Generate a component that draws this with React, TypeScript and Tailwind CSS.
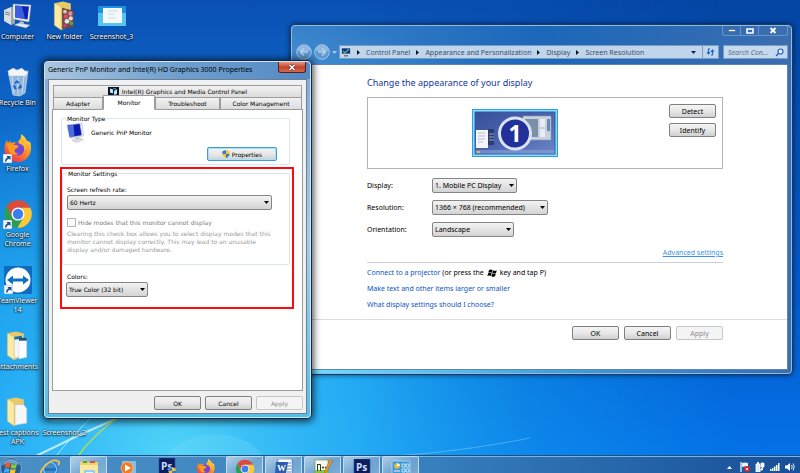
import type { ReactNode } from "react";
import clsx from "clsx";

const TAHOMA = "font-['DejaVu_Sans',sans-serif] text-[6px] leading-[9px]";
const SEGOE = "font-['Noto_Sans','Open_Sans',sans-serif] text-[7px] leading-[9px]";

function ComputerIcon() {
  return (
    <svg viewBox="0 0 30 28" className="h-[28px] w-[30px]">
      <path d="M1 8l7-3 4 1v15l-4 2-7-4z" fill="#d9dee3" />
      <path d="M8 5l4 1v15l-4 2z" fill="#9aa5b0" />
      <path d="M2 10l5 1M2 12l5 1" stroke="#7c8791" />
      <path d="M10 2l18 1-2 17-16-3z" fill="#eef2f5" stroke="#8b98a6" strokeWidth=".5" />
      <path d="M12 3.500l14 1-1.500 13-12.500-2z" fill="#0d22b4" />
      <path d="M12 3.500l7 .5 3 13-10-1.500z" fill="#4f78ee" opacity=".7" />
      <path d="M17 19l4 1-.5 3h-4z" fill="#b9c2ca" />
      <path d="M11 23l5-2 11 2-4 3z" fill="#e6eaee" stroke="#919ba5" strokeWidth=".4" />
    </svg>
  );
}

function MonitorIcon({ className }: { className: string }) {
  return (
    <svg viewBox="0 0 18 20" className={className}>
      <path d="M3 2l13-1.500 1.500 12.500-12.500 2.500z" fill="#edf1f5" stroke="#a3afba" strokeWidth=".5" />
      <path d="M1 2l13-1.500 2 12-12.500 2z" fill="#0b1bb0" stroke="#cfd6de" strokeWidth=".7" />
      <path d="M1.500 2.500l6-.7 1 11.700-4.500.7z" fill="#6b8df0" opacity=".7" />
      <path d="M9 14.500l4-.5 1 2.500-4 .5z" fill="#c5ccd3" />
      <path d="M6 17.500l8-2.500 3.500 1.500-7 3z" fill="#dce1e6" stroke="#9ea8b2" strokeWidth=".4" />
    </svg>
  );
}

function FolderIcon({ kind }: { kind: "photos" | "docs" | "page" }) {
  return (
    <svg viewBox="0 0 26 31" className="h-[30px] w-[26px]">
      <path d="M3 2l8-1.500 8 2v23L9 30z" fill="#e8c868" />
      {kind === "photos" && (
        <g>
          <path d="M10 7l12 3v17l-12 2z" fill="#6b4a4c" />
          <circle cx="13" cy="11" r="2" fill="#ecc3a6" />
          <circle cx="18.500" cy="13" r="2.300" fill="#e58a9a" />
          <circle cx="14" cy="16" r="2.300" fill="#d94f63" />
          <circle cx="19" cy="18" r="2.200" fill="#f1d9c8" />
          <circle cx="15" cy="21" r="2.500" fill="#dfe8e0" />
          <circle cx="19.500" cy="23" r="2" fill="#5ba04c" />
          <circle cx="13" cy="25" r="2" fill="#c4425c" />
        </g>
      )}
      {kind === "docs" && (
        <g>
          <path d="M9 6l8-1 0 21-8 2z" fill="#f4f7f9" stroke="#b9c1c9" strokeWidth=".4" />
          <path d="M9 6l8-1v3l-8 1z" fill="#1f6f9c" />
          <path d="M14 9l8-2v20l-8 2z" fill="#ffffff" stroke="#b9c1c9" strokeWidth=".4" />
          <path d="M14 7l8 0v3l-8 0z" fill="#15577f" />
        </g>
      )}
      {kind === "page" && (
        <path d="M10 8l9 0 3 4v15l-12 2z" fill="#f6f7f8" stroke="#bfc5cb" strokeWidth=".5" />
      )}
      <path d="M2 2l7 4.500V30l-7-5z" fill="#fbe9a6" stroke="#d7b657" strokeWidth=".4" />
    </svg>
  );
}

function ScreenshotIcon() {
  return (
    <svg viewBox="0 0 28 20" className="h-[20px] w-[28px]">
      <rect width="28" height="20" fill="#57c5ee" />
      <rect width="28" height="7" fill="#1c93da" />
      <rect x="5" y="2" width="19" height="15" fill="#f3f8fb" />
      <path d="M10 5h10M10 8h6M10 12h8" stroke="#c3ced6" strokeWidth=".7" />
    </svg>
  );
}

function RecycleBinIcon() {
  return (
    <svg viewBox="0 0 26 30" className="h-[30px] w-[26px]">
      <path d="M3 4l20 0-3 22-5 3-7-1z" fill="#a7c5de" fillOpacity=".85" stroke="#dfeaf3" strokeWidth=".6" />
      <path d="M3 4l5-3 4 2 5-2 3 3 3 1-2 4-17 0z" fill="#f1f5f9" stroke="#9eb1c2" strokeWidth=".4" />
      <path d="M7 9l2 17M19 9l-2 17M13 10v18" stroke="#e9f2f8" strokeWidth=".7" />
      <path d="M9 16l3-3 3 3-2 .5-1-1-1.500 1.500z M16 17l1 4-4 1 .5-2z M8 18l1 4 3 .5-1-2-.500-2z" fill="#1f62c9" />
    </svg>
  );
}

function FirefoxIcon({ className }: { className: string }) {
  return (
    <svg viewBox="0 0 30 30" className={className}>
      <defs>
        <linearGradient id="flame" x1=".8" y1="0" x2=".2" y2="1">
          <stop offset="0" stopColor="#ffe14a" />
          <stop offset=".45" stopColor="#ff9422" />
          <stop offset="1" stopColor="#ee2b50" />
        </linearGradient>
      </defs>
      <path
        d="M18 1c3 2 5 4 6 7 2 0 3 1 3.500 2 2 9-2 18-12 19C7 29 1 23 1.500 15c0-3 1-6 2.500-8l1 3 2-2 1 2c2-1 4-1 6 0 2-2 5-5 4-9z"
        fill="url(#flame)"
      />
      <circle cx="15" cy="16" r="6.500" fill="#7446d8" />
      <path d="M4 11c4-1 6 1 9 1 2 0 3 1 2 2.500-1 1-3 1-3.500 3 0 2 2 3 4 3-5 3-9 0-10-4z" fill="#ff9a1e" />
      <path d="M16 11c4 0 6 3 5 7 3-3 2-8-1-11l-3-1z" fill="#ffb62e" />
    </svg>
  );
}

function ChromeIcon({ className }: { className: string }) {
  return (
    <svg viewBox="0 0 48 48" className={className}>
      <path d="M5.540 12.030A22 22 0 0 1 43.600 14L24 14L15.340 29z" fill="#dd4b3c" />
      <path d="M43.600 14A22 22 0 0 1 22.860 45.970L32.660 29L24 14z" fill="#fcc934" />
      <path d="M22.860 45.970A22 22 0 0 1 5.540 12.030L15.340 29L32.660 29z" fill="#2b9f51" />
      <circle cx="24" cy="24" r="10.500" fill="#fff" />
      <circle cx="24" cy="24" r="8.300" fill="#3c7eee" />
    </svg>
  );
}

function TeamViewerIcon() {
  return (
    <svg viewBox="0 0 28 28" className="h-[28px] w-[28px]">
      <rect width="28" height="28" rx="1" fill="#0d6cc0" />
      <circle cx="14" cy="14" r="12.500" fill="#fff" />
      <path d="M3 14l6-4.500v3h10v-3l6 4.500-6 4.500v-3H9v3z" fill="#0f6fc2" />
    </svg>
  );
}

function Shortcut() {
  return (
    <svg viewBox="0 0 9 9" className="absolute bottom-0 left-0 h-[9px] w-[9px]">
      <rect width="9" height="9" fill="#f5f9fc" stroke="#7f97ab" strokeWidth=".6" />
      <path d="M2 7.500c0-2 1-3.500 2.500-4L3.500 2H7.500V6L6 4.800C4.500 5.200 3.500 6 3.500 7.500z" fill="#1b4f96" />
    </svg>
  );
}

function Shield({ className }: { className: string }) {
  return (
    <svg viewBox="0 0 10 10" className={className}>
      <path d="M5 0l4.500 1.500V5H5z" fill="#f5c52d" />
      <path d="M5 0L.5 1.500V5H5z" fill="#3b78cf" />
      <path d="M.5 5H5v5C3 9.500.5 7.500.5 5z" fill="#f5c52d" />
      <path d="M5 5h4.500C9.500 7.500 7 9.500 5 10z" fill="#3b78cf" />
    </svg>
  );
}

function PhotoshopIcon() {
  return (
    <svg viewBox="0 0 18 20" className="h-[20px] w-[18px]">
      <rect x="1" y="0" width="16" height="17" fill="#0d1c5c" stroke="#2d4fa8" strokeWidth=".6" />
      <text x="3" y="12" fontSize="10" fontWeight="700" fill="#cfe0ff" fontFamily="Open Sans, sans-serif">
        Ps
      </text>
    </svg>
  );
}

function Wallpaper() {
  return (
    <svg viewBox="0 0 800 473" preserveAspectRatio="none" className="absolute inset-0 h-full w-full">
      <defs>
        <linearGradient id="sky" x1="0" y1="0" x2="0" y2="1">
          <stop offset="0" stopColor="#0a50b4" />
          <stop offset=".25" stopColor="#0e68c8" />
          <stop offset=".6" stopColor="#0f8ee2" />
          <stop offset="1" stopColor="#159cf2" />
        </linearGradient>
        <linearGradient id="eastTone" x1="0" y1="0" x2="0" y2="1">
          <stop offset="0" stopColor="#0445a2" />
          <stop offset=".6" stopColor="#0458c8" />
          <stop offset="1" stopColor="#0474ea" />
        </linearGradient>
        <linearGradient id="fade" x1="0" y1="0" x2="1" y2="0">
          <stop offset=".45" stopColor="#000" />
          <stop offset=".92" stopColor="#fff" />
        </linearGradient>
        <mask id="eastMask">
          <rect width="800" height="473" fill="url(#fade)" />
        </mask>
        <radialGradient id="glow" cx="170" cy="450" r="370" gradientUnits="userSpaceOnUse">
          <stop offset="0" stopColor="#52d6f9" stopOpacity=".95" />
          <stop offset=".5" stopColor="#2cb4f7" stopOpacity=".7" />
          <stop offset="1" stopColor="#2cb4f7" stopOpacity="0" />
        </radialGradient>
      </defs>
      <rect width="800" height="473" fill="url(#sky)" />
      <rect width="800" height="473" fill="url(#glow)" />
      <rect width="800" height="473" fill="url(#eastTone)" mask="url(#eastMask)" />
      <ellipse cx="215" cy="470" rx="52" ry="36" fill="#8ee6fb" opacity=".2" />
      <path d="M36 456C60 444 85 432 122 416" stroke="#d9f6fb" strokeWidth="2" fill="none" opacity=".8" />
      <path d="M56 456C66 444 76 432 92 417" stroke="#d9f6fb" strokeWidth="1" fill="none" opacity=".7" />
      <path d="M78 456C88 442 100 430 120 416" stroke="#b4de4e" strokeWidth="1.500" fill="none" />
      <path d="M390 456C430 454 480 448 530 438" stroke="#9fe0fb" strokeWidth="1" fill="none" opacity=".4" />
    </svg>
  );
}

function DesktopItem({ label, className, shortcut, children }: { label: string; className: string; shortcut?: boolean; children?: ReactNode }) {
  return (
    <div className={clsx("flex flex-col items-center", className)}>
      <div className="flex h-[33px] items-center">
        <div className="relative">
          {children}
          {shortcut && <Shortcut />}
        </div>
      </div>
      <span className="w-[47px] text-center text-white [text-shadow:0_1px_2px_#000,0_0_2px_#000]">{label}</span>
    </div>
  );
}

function Button({ children, className, disabled }: { children: ReactNode; className?: string; disabled?: boolean }) {
  return (
    <button
      type="button"
      disabled={disabled}
      className={clsx(
        "flex h-[14px] items-center justify-center rounded-[2px] border",
        className ?? "w-[47px]",
        disabled
          ? "border-[#c4c7c9] bg-[#f4f4f4] text-[#8a8a8a]"
          : "bg-linear-to-b from-[#f4f4f4] via-[#e8e8e8] to-[#d0d0d0] text-black",
        !disabled && !className && "border-[#808080]"
      )}
    >
      {children}
    </button>
  );
}

function Select({ id, value, className }: { id: string; value: string; className: string }) {
  return (
    <div className={clsx("relative", className)}>
      <select
        id={id}
        className="block h-[15px] w-full appearance-none rounded-[2px] border border-[#858585] bg-linear-to-b from-[#f3f3f3] to-[#d4d4d4] pl-[2px] text-black"
      >
        <option>{value}</option>
      </select>
      <svg viewBox="0 0 5 3" className="pointer-events-none absolute top-[6px] right-[3px] h-[3px] w-[5px]">
        <path d="M0 0h5L2.500 3z" fill="#000" />
      </svg>
    </div>
  );
}

function Crumb({ children }: { children: string }) {
  return (
    <>
      <svg viewBox="0 0 3 5" className="h-[5px] w-[3px] shrink-0">
        <path d="M0 0v5l3-2.500z" fill="#111" />
      </svg>
      <a href="#" className="whitespace-nowrap text-[#3f4f63]">{children}</a>
    </>
  );
}

function NavArrow({ flip }: { flip?: boolean }) {
  return (
    <button type="button" aria-label={flip ? "Forward" : "Back"}>
      <svg viewBox="0 0 16 16" className={clsx("h-[16px] w-[16px]", flip && "-scale-x-100")}>
        <circle cx="8" cy="8" r="7.300" fill="#5d98d3" stroke="#a9c7e6" strokeWidth="1" />
        <path d="M1.500 7a6.500 6 0 0 1 13 0z" fill="#a5c7e8" opacity=".7" />
        <path d="M12 8H5M8 4.500L4.500 8 8 11.500" stroke="#b9d2ea" strokeWidth="1.600" fill="none" />
      </svg>
    </button>
  );
}

function DisplayPreview() {
  return (
    <svg viewBox="0 0 86 48" className="h-[48px] w-[86px]">
      <defs>
        <linearGradient id="screen" x1="0" y1="0" x2="1" y2="1">
          <stop offset="0" stopColor="#3a4f9a" />
          <stop offset=".5" stopColor="#4a63ad" />
          <stop offset="1" stopColor="#6d86c6" />
        </linearGradient>
      </defs>
      <rect x=".5" y=".5" width="85" height="47" fill="#8bdcfd" stroke="#2b9fe8" />
      <rect x="3" y="3" width="80" height="42" fill="url(#screen)" stroke="#2f5fae" />
      <path d="M3.500 41h79v3.500h-79z" fill="#8ba4da" opacity=".6" />
      <rect x="5" y="42" width="3" height="2" fill="#e9b93c" />
      <rect x="4" y="21" width="12" height="18" fill="#f4f6f9" />
      <path d="M6 24h7M6 27h7M6 30h7M6 33h5" stroke="#a7b0c0" strokeWidth=".8" />
      <rect x="16" y="20" width="6" height="16" fill="#2b3c70" />
      <path d="M17 25h5M17 28h5M17 31h5" stroke="#94a6cc" strokeWidth="1" />
      <rect x="51" y="7" width="28" height="24" fill="#c7d1de" stroke="#8b99ae" strokeWidth=".6" />
      <rect x="53" y="10" width="13" height="18" fill="#7891a9" />
      <rect x="68" y="10" width="5" height="8" fill="#e9edf2" />
      <rect x="68" y="20" width="5" height="8" fill="#e9edf2" />
      <rect x="75" y="10" width="3" height="12" fill="#6d87b0" />
      <circle cx="43" cy="24.500" r="15.500" fill="#22309a" stroke="#dbe2f3" strokeWidth="3" />
      <text x="43" y="33" textAnchor="middle" fontSize="23" fontWeight="700" fill="#fff" fontFamily="Noto Sans, sans-serif">
        1
      </text>
    </svg>
  );
}

function ScreenResolutionWindow() {
  return (
    <section
      className={clsx(
        SEGOE,
        "absolute top-[24px] right-[7px] left-[290px] flex flex-col rounded-[5px] border border-[#173a6b] bg-[radial-gradient(at_0_100%,#6fe0fb,transparent_70%),linear-gradient(to_right,#3a83cc,#1c67ba,#3b6eaf)] shadow-[0_0_5px_rgba(0,0,0,0.6)]"
      )}
    >
      <div className="flex flex-col rounded-[4px] border border-[#8fbbe4] px-[3px] pb-[3px]">
        <div className="flex h-[10px] justify-end text-white">
          <div className="flex rounded-b-[3px] border border-t-0 border-[#6a93c6]">
            <button type="button" aria-label="Minimize" className="flex w-[18px] items-center justify-center border-r border-[#6a93c6]">
              <svg viewBox="0 0 8 3" className="h-[3px] w-[8px]"><path d="M.5.5h7v2h-7z" fill="#fff" stroke="#34445c" strokeWidth=".5" /></svg>
            </button>
            <button type="button" aria-label="Maximize" className="flex w-[18px] items-center justify-center border-r border-[#6a93c6]">
              <svg viewBox="0 0 8 6" className="h-[6px] w-[8px]"><path d="M1 1h6v4H1z" fill="none" stroke="#fff" strokeWidth="1.600" /></svg>
            </button>
            <button type="button" aria-label="Close" className="flex w-[28px] items-center justify-center">
              <svg viewBox="0 0 8 7" className="h-[7px] w-[8px]"><path d="M1.500 1l5 5M6.500 1l-5 5" stroke="#fff" strokeWidth="1.800" /></svg>
            </button>
          </div>
        </div>

        <div className="mt-[8px] mb-[4px] flex h-[16px] items-center pl-[1px]">
          <NavArrow />
          <span className="w-[2px]" />
          <NavArrow flip />
          <svg viewBox="0 0 5 3" className="mx-[2px] h-[3px] w-[5px]"><path d="M0 0h5L2.500 3z" fill="#a9c8e8" /></svg>
          <nav className="flex h-[14px] flex-1 items-center gap-[6px] border border-[#7b9cc2] bg-[#bfd5ec] pl-[1px]">
            <svg viewBox="0 0 10 10" className="h-[10px] w-[10px]">
              <rect x=".5" y="1" width="9" height="6" fill="#142c8f" stroke="#dfe6ee" strokeWidth=".6" />
              <path d="M2 4l2 2 4-4" stroke="#51c94d" strokeWidth="1.200" fill="none" />
              <path d="M3 8h4v1.500H3z" fill="#6f7f92" />
            </svg>
            <Crumb>Control Panel</Crumb>
            <Crumb>Appearance and Personalization</Crumb>
            <Crumb>Display</Crumb>
            <Crumb>Screen Resolution</Crumb>
            <span className="flex-1" />
            <svg viewBox="0 0 5 3" className="h-[3px] w-[5px]"><path d="M0 0h5L2.500 3z" fill="#12234a" /></svg>
            <button type="button" aria-label="Refresh" className="flex h-full w-[16px] items-center justify-center border-l border-[#7b9cc2]">
              <svg viewBox="0 0 9 8" className="h-[8px] w-[9px]">
                <path d="M4 1H2.500v4M1 4l1.500 2L4 4M5 7h1.500V3M5 4l1.500-2L8 4" stroke="#1b68c9" strokeWidth="1.100" fill="none" />
              </svg>
            </button>
          </nav>
          <div className="ml-[4px] flex h-[14px] w-[65px] items-center border border-[#7b9cc2] bg-[#c6daef] pr-[3px] pl-[4px]">
            <input aria-label="Search Control Panel" placeholder="Search Con..." className="w-full min-w-0 italic outline-none placeholder:text-[#5d6c80]" />
            <svg viewBox="0 0 9 9" className="h-[9px] w-[9px] shrink-0">
              <circle cx="5.500" cy="3.500" r="2.500" fill="#e6f2fd" stroke="#1b62c4" strokeWidth="1.200" />
              <path d="M3.500 5.500L1 8" stroke="#1b62c4" strokeWidth="1.500" />
            </svg>
          </div>
        </div>

        <div className="border border-[#5c86b5] bg-white">
          <div className="mr-[64px] ml-[71px] pt-[11px]">
            <h1 className="text-[9px] leading-[14px] text-[#12379c]">Change the appearance of your display</h1>
            <div className="mt-[7px] flex h-[72px] items-start justify-center border border-[#b4b4b4] pt-[11px]">
              <div className="flex flex-1 justify-end pr-[3px]">
                <DisplayPreview />
              </div>
              <div className="-mt-[5px] flex w-[161px] flex-col items-end gap-[5px] pr-[6px]">
                <Button>Detect</Button>
                <Button>Identify</Button>
              </div>
            </div>
            <div className="mt-[9px] grid grid-cols-[65px_1fr] items-center gap-y-[7px]">
              <label htmlFor="display">Display:</label>
              <Select id="display" value="1. Mobile PC Display" className="w-[85px]" />
              <label htmlFor="resolution">Resolution:</label>
              <Select id="resolution" value="1366 × 768 (recommended)" className="w-[116px]" />
              <label htmlFor="orientation">Orientation:</label>
              <Select id="orientation" value="Landscape" className="w-[82px]" />
            </div>
            <div className="mt-[11px] flex justify-end border-b border-[#cfcfcf] pb-[5px]">
              <a href="#" className="text-[#3a93e6] underline">Advanced settings</a>
            </div>
            <div className="mt-[5px] flex flex-col gap-[7px] text-[#0b56c4]">
              <p className="flex items-center text-black">
                <a href="#" className="text-[#0b56c4]">Connect to a projector</a>
                <span className="ml-[2px]">(or press the</span>
                <svg viewBox="0 0 10 8" className="mx-[3px] h-[8px] w-[10px]">
                  <path d="M2 1q2-1 3.500 0L4.800 3.700q-1.500-1-3.500 0zM6 1.200q2 1 3.800 0L9 4q-2 1-3.700 0zM1.200 4.300q2-1 3.400 0L3.800 7q-1.500-1-3.500 0zM5.200 4.500q2 1 3.700 0L8 7.300q-2 1-3.700 0z" fill="#000" />
                </svg>
                <span>key and tap P)</span>
              </p>
              <a href="#">Make text and other items larger or smaller</a>
              <a href="#">What display settings should I choose?</a>
            </div>
          </div>
          <div className="mt-[10px] flex h-[50px] justify-end gap-[5px] border-t border-[#dcdcdc] pt-[6px] pr-[64px]">
            <Button>OK</Button>
            <Button>Cancel</Button>
            <Button disabled>Apply</Button>
          </div>
        </div>
      </div>
    </section>
  );
}

function Tab({ children, active, className }: { children: ReactNode; active?: boolean; className?: string }) {
  return (
    <button
      type="button"
      role="tab"
      aria-selected={active}
      className={clsx(
        "flex items-center justify-center whitespace-nowrap border",
        active ? "-mt-[2px] h-[15px] border-[#9a9c9e] border-b-white bg-white" : "h-[12px] border-[#9a9c9e] border-b-0 bg-linear-to-b from-[#f2f2f2] to-[#dcdcdc]",
        className
      )}
    >
      {children}
    </button>
  );
}

function MonitorPropertiesDialog() {
  return (
    <section
      className={clsx(
        TAHOMA,
        "absolute top-[60px] left-[43px] w-[269px] rounded-[5px] border border-[#17283e] bg-linear-to-b from-[#7fa9d3] via-[#a3cdea] to-[#4fc0ea] text-black shadow-[0_1px_7px_2px_rgba(0,0,0,0.65)]"
      )}
    >
      <div className="rounded-[4px] border border-[#cfe4f5] px-[3px] pb-[3px]">
        <header className={clsx(SEGOE, "-mx-[3px] flex h-[17px] items-start justify-between rounded-t-[4px] bg-linear-to-r from-[#a9c6e1] via-[#6f9fcf] to-[#5389c4] pr-[4px] pl-[3px]")}>
          <h2 className="mt-[3px] whitespace-nowrap">Generic PnP Monitor and Intel(R) HD Graphics 3000 Properties</h2>
          <button type="button" aria-label="Close" className="flex h-[11px] w-[28px] items-center justify-center rounded-b-[3px] border border-t-0 border-[#5a1d1a] bg-linear-to-b from-[#e19a8b] via-[#c6402c] to-[#d2694a]">
            <svg viewBox="0 0 8 7" className="h-[7px] w-[8px]">
              <path d="M1.500 1l5 5M6.500 1l-5 5" stroke="#5b2b2b" strokeWidth="2.600" />
              <path d="M1.500 1l5 5M6.500 1l-5 5" stroke="#fff" strokeWidth="1.600" />
            </svg>
          </button>
        </header>

        <div className="border border-[#6c8092] bg-[#f0f0f0] px-[3px] pt-[5px] pb-[3px]">
          <div role="tablist" className="mx-[1px]">
            <Tab className="w-full gap-[3px]">
              <svg viewBox="0 0 11 9" className="h-[9px] w-[11px]">
                <rect width="11" height="9" fill="#0b1420" />
                <path d="M2 1.500l3 1v4l-3-1zM6 4l3-2v5l-3 1z" fill="#bfe6f5" />
                <path d="M5 2l3-.5" stroke="#4aa3cf" />
              </svg>
              Intel(R) Graphics and Media Control Panel
            </Tab>
            <div className="flex">
              <Tab className="w-[50px]">Adapter</Tab>
              <Tab active className="w-[52px]">Monitor</Tab>
              <Tab className="w-[65px]">Troubleshoot</Tab>
              <Tab className="flex-1">Color Management</Tab>
            </div>
          </div>

          <div className="-mt-px flex h-[282px] flex-col border border-[#9a9c9e] bg-white pt-[4px] pr-[8px] pl-[7px]">
            <fieldset className="mr-[4px] ml-px rounded-[2px] border border-[#dce5ec] px-[4px] pb-[3px]">
              <legend className="px-[1px]">Monitor Type</legend>
              <div className="flex items-start gap-[7px]">
                <MonitorIcon className="h-[20px] w-[18px]" />
                <span className="mt-[5px]">Generic PnP Monitor</span>
              </div>
              <div className="mt-[4px] flex justify-end pr-[8px]">
                <Button className="w-[70px] gap-[2px] border-[#3c9fcc] shadow-[inset_0_0_0_1px_#a5e1f8]">
                  <Shield className="h-[8px] w-[8px]" />
                  Properties
                </Button>
              </div>
            </fieldset>

            <div className="mt-[2px] border-2 border-[#fb0c0c] pb-[10px]">
              <fieldset className="mr-[2px] rounded-[2px] border border-[#dce5ec] px-[4px] pb-[10px]">
                <legend className="px-[1px]">Monitor Settings</legend>
                <label htmlFor="rate" className="mt-[7px] block">Screen refresh rate:</label>
                <Select id="rate" value="60 Hertz" className="mt-px w-[205px]" />
                <label className="mt-[8px] flex items-center gap-[2px] text-[#7b7b7b]">
                  <input type="checkbox" disabled className="h-[9px] w-[9px] appearance-none border border-[#b5b8ba] bg-[#fafafa]" />
                  Hide modes that this monitor cannot display
                </label>
                <p className="mt-[3px] w-[210px] leading-[8px] text-[#9b9b9b]">
                  Clearing this check box allows you to select display modes that this monitor cannot display correctly. This may lead to an unusable display and/or damaged hardware.
                </p>
              </fieldset>
              <label htmlFor="colors" className="mt-[7px] ml-[5px] block">Colors:</label>
              <Select id="colors" value="True Color (32 bit)" className="mt-px ml-[4px] w-[82px]" />
            </div>
          </div>

          <div className="mt-[5px] flex justify-end gap-[4px]">
            <Button>OK</Button>
            <Button>Cancel</Button>
            <Button disabled>Apply</Button>
          </div>
        </div>
      </div>
    </section>
  );
}

function TaskButton({ label, open, children }: { label: string; open?: boolean; children: ReactNode }) {
  return (
    <button
      type="button"
      aria-label={label}
      className={clsx(
        "flex h-[24px] w-[37px] shrink-0 items-start justify-center pt-[2px]",
        open && "rounded-t-[2px] border border-[#c3dcf0] bg-linear-to-br from-white/60 via-white/25 to-white/35"
      )}
    >
      {children}
    </button>
  );
}

function Taskbar() {
  return (
    <footer className="relative flex h-[18px] shrink-0 items-start overflow-hidden border-t border-[#1d4f80] bg-linear-to-r from-[#4a8fc4] via-[#3a83c0] to-[#174f98] shadow-[inset_0_1px_0_#7fb3dd]">
      <button type="button" aria-label="Start" className="mr-[9px] h-[22px] w-[22px] shrink-0">
        <svg viewBox="0 0 22 22" className="h-[22px] w-[22px]">
          <circle cx="11" cy="12" r="10.500" fill="#215f97" stroke="#7db5df" strokeWidth=".8" />
          <path d="M2 9a9.500 9 0 0 1 18 0q-9-3-18 0z" fill="#8fbfe2" opacity=".7" />
          <path d="M5.500 7.500q2.500-2 5 0L9.700 12q-2.500-1.500-5 0z" fill="#ee5a24" />
          <path d="M11.500 7.800q2.500 1.500 5.500-.3L16 12q-2.500 1.500-5.300 0z" fill="#8cc63f" />
          <path d="M4.500 13q2.500-1.500 5 0l-.8 4q-2.500-1.500-5 0z" fill="#3fa9f5" />
          <path d="M10.500 13q2.500 1.500 5.300 0l-1 4q-2.500 1.500-5 0z" fill="#fcc521" />
        </svg>
      </button>
      <div className="flex flex-1 gap-[2px]">
        <TaskButton label="Internet Explorer">
          <svg viewBox="0 0 20 20" className="h-[20px] w-[20px]">
            <circle cx="10" cy="11" r="6.500" fill="none" stroke="#2f86d6" strokeWidth="4" />
            <circle cx="10" cy="11" r="6.500" fill="none" stroke="#7cc8f5" strokeWidth="1.200" />
            <path d="M5 11.500h11" stroke="#1c6fc0" strokeWidth="2.500" />
            <path d="M1.500 18C-2 12 11 0 18 3c1.500.6 1.200 2.500.3 4" stroke="#f3c23c" strokeWidth="1.800" fill="none" />
          </svg>
        </TaskButton>
        <TaskButton label="Windows Explorer" open>
          <svg viewBox="0 0 22 20" className="h-[20px] w-[22px]">
            <path d="M2 3l6-2 1 2h11v16H2z" fill="#f0cf6e" />
            <path d="M5 2h4v2H5z" fill="#45a64a" />
            <path d="M12 2h5v2h-5z" fill="#d9533c" />
            <path d="M2 6h18v13H2z" fill="#fbe8a0" />
            <path d="M6 11h11v8H6z" fill="#8fd0f0" />
            <path d="M8 13h7v4H8z" fill="#e4f6fd" />
          </svg>
        </TaskButton>
        <TaskButton label="Media Player">
          <svg viewBox="0 0 18 20" className="h-[20px] w-[18px]">
            <rect x="3" y="3" width="14" height="14" rx="1" fill="#9fc9e8" opacity=".8" />
            <circle cx="8" cy="10" r="6" fill="#f47b20" stroke="#fbc08a" strokeWidth=".6" />
            <path d="M6 6.500v7l6-3.500z" fill="#fff" />
          </svg>
        </TaskButton>
        <TaskButton label="Photoshop installer">
          <span className="relative">
            <PhotoshopIcon />
            <Shield className="absolute right-0 bottom-[3px] h-[8px] w-[8px]" />
          </span>
        </TaskButton>
        <TaskButton label="Firefox">
          <FirefoxIcon className="h-[20px] w-[20px]" />
        </TaskButton>
        <TaskButton label="Chrome" open>
          <ChromeIcon className="h-[20px] w-[20px]" />
        </TaskButton>
        <TaskButton label="Word" open>
          <svg viewBox="0 0 20 20" className="h-[20px] w-[20px]">
            <path d="M4 0h14v18H4z" fill="#fff" stroke="#3d68b5" strokeWidth=".6" />
            <path d="M13 4h4M13 7h4M13 10h4M13 13h4" stroke="#5a82c8" />
            <path d="M2 3l12 0-2 12H1z" fill="#2a5db0" />
            <text x="3" y="12" fontSize="9" fontWeight="700" fill="#fff" fontFamily="Liberation Serif, serif">W</text>
          </svg>
        </TaskButton>
        <TaskButton label="Notepad++" open>
          <svg viewBox="0 0 20 20" className="h-[20px] w-[20px]">
            <path d="M2 1h13v17H2z" fill="#f4f8ee" stroke="#6f8f4c" strokeWidth=".6" />
            <path d="M2 11h13v7H2z" fill="#86c440" />
            <path d="M4.500 5v7M4.500 5.500h3V12M9 8.500h2M10 7.500v2M12 8.500h2M13 7.500v2" stroke="#2f3c25" strokeWidth="1" fill="none" />
            <path d="M17.500 0l2 1-6 12-2 1.500 0-2.500z" fill="#f29a2e" stroke="#8b4f12" strokeWidth=".4" />
          </svg>
        </TaskButton>
        <TaskButton label="Photoshop" open>
          <PhotoshopIcon />
        </TaskButton>
        <TaskButton label="Control Panel" open>
          <svg viewBox="0 0 20 20" className="h-[20px] w-[20px]">
            <rect x="1" y="2" width="18" height="13" rx="1" fill="#3f9bd6" stroke="#c5e4f7" strokeWidth=".7" />
            <circle cx="6" cy="7" r="2.800" fill="#f5b63a" />
            <path d="M6 4.200A2.800 2.800 0 0 1 8.800 7H6z" fill="#fff" />
            <path d="M11 5h3v3h-3zM15 5h3v3h-3zM11 10h3v3h-3zM15 10h3v3h-3z" fill="none" stroke="#e4f4fd" strokeWidth=".8" />
            <path d="M3 12h6" stroke="#e4f4fd" />
          </svg>
        </TaskButton>
      </div>
      <div className="flex items-center gap-[5px] pt-[6px] pr-[5px]">
        <svg viewBox="0 0 5 3" className="mr-[3px] h-[3px] w-[5px]"><path d="M0 3h5L2.500 0z" fill="#fff" /></svg>
        <svg viewBox="0 0 10 10" className="h-[10px] w-[10px]">
          <path d="M1 0v10" stroke="#fff" strokeWidth="1.200" />
          <path d="M2 1q3-1 6 0v4q-3-1-6 0z" fill="#e9f1f8" />
          <circle cx="7" cy="7" r="3" fill="#da2128" />
          <path d="M5.800 5.800l2.400 2.400M8.200 5.800L5.800 8.200" stroke="#fff" strokeWidth=".9" />
        </svg>
        <svg viewBox="0 0 10 10" className="h-[10px] w-[10px]">
          <path d="M1 2h4v8H1z" fill="#dfe9f2" stroke="#fff" strokeWidth=".8" />
          <path d="M2.500 0h1v2h-1zM6 1h3v4H6zM7.500 5v3H5" fill="#fff" stroke="#fff" strokeWidth=".7" />
        </svg>
        <svg viewBox="0 0 10 8" className="h-[8px] w-[10px]">
          <path d="M0 6h1.500v2H0zM2 5h1.500v3H2zM4 3.500h1.500V8H4zM6 2h1.500v6H6zM8 0h1.500v8H8z" fill="#fff" />
        </svg>
        <svg viewBox="0 0 10 10" className="h-[10px] w-[10px]">
          <path d="M0 3.500h2L5 1v8L2 6.500H0z" fill="#fff" />
          <path d="M6.500 3q1.500 2 0 4M8 1.500q2.500 3.500 0 7" stroke="#fff" strokeWidth=".9" fill="none" />
        </svg>
      </div>
    </footer>
  );
}

export default function App() {
  return (
    <div className="relative flex h-screen flex-col overflow-hidden bg-[#0d62c4]">
      <Wallpaper />
      <main className="relative min-h-0 flex-1">
        <div className={clsx(SEGOE, "-mt-px -ml-[6px] grid auto-rows-[66px] grid-cols-[repeat(3,47px)]")}>
          <DesktopItem label="Computer" className="col-start-1 row-start-1"><ComputerIcon /></DesktopItem>
          <DesktopItem label="New folder" className="col-start-2 row-start-1"><FolderIcon kind="photos" /></DesktopItem>
          <DesktopItem label="Screenshot_3" className="col-start-3 row-start-1"><ScreenshotIcon /></DesktopItem>
          <DesktopItem label="Recycle Bin" className="col-start-1 row-start-2"><RecycleBinIcon /></DesktopItem>
          <DesktopItem label="Firefox" shortcut className="col-start-1 row-start-3"><FirefoxIcon className="h-[30px] w-[30px]" /></DesktopItem>
          <DesktopItem label="Google Chrome" shortcut className="col-start-1 row-start-4"><ChromeIcon className="h-[30px] w-[30px]" /></DesktopItem>
          <DesktopItem label="TeamViewer 14" shortcut className="col-start-1 row-start-5"><TeamViewerIcon /></DesktopItem>
          <DesktopItem label="attachments" className="col-start-1 row-start-6"><FolderIcon kind="docs" /></DesktopItem>
          <DesktopItem label="test captions APK" className="col-start-1 row-start-7"><FolderIcon kind="page" /></DesktopItem>
          <DesktopItem label="Screenshot_2" className="col-start-2 row-start-7"><ScreenshotIcon /></DesktopItem>
        </div>
        <ScreenResolutionWindow />
        <MonitorPropertiesDialog />
      </main>
      <Taskbar />
    </div>
  );
}
